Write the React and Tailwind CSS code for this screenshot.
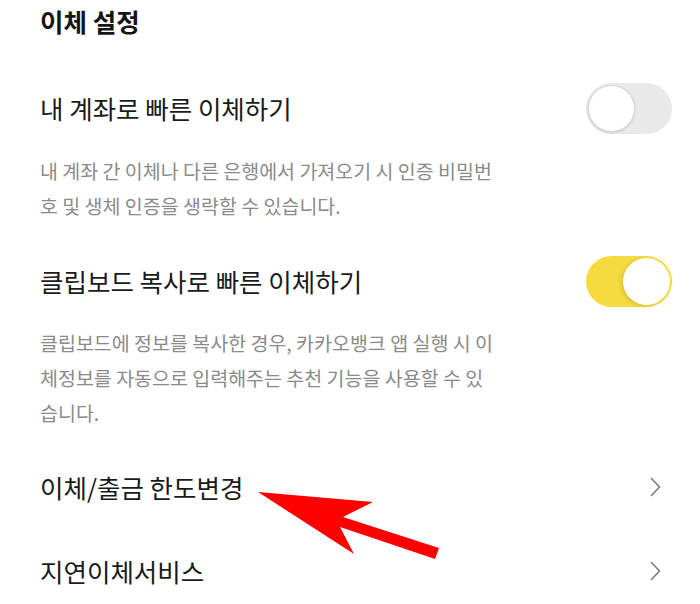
import React from "react";

const font = { fontFamily: '"Noto Sans CJK KR", "Noto Sans", sans-serif' };

const Toggle = ({ on }) => (
  <div
    className={`relative w-[86px] h-[51px] rounded-full flex items-center px-[2px] ${
      on ? "bg-[#f6db3f] justify-end" : "bg-[#e9e9ea] justify-start"
    }`}
  >
    <div
      className={`w-[47px] h-[47px] rounded-full bg-white ${
        on ? "shadow-[-2px_1px_4px_rgba(0,0,0,0.12)]" : "border border-[#d6d6d6] shadow-[0_1px_3px_rgba(0,0,0,0.12)]"
      }`}
    />
  </div>
);

const Chevron = () => (
  <svg width="11" height="20" viewBox="0 0 11 20" fill="none">
    <path d="M1.5 1.5 L9.5 10 L1.5 18.5" stroke="#7b7b7b" strokeWidth="1.6" strokeLinecap="round" strokeLinejoin="round" />
  </svg>
);

const Desc = ({ children, className = "" }) => (
  <p className={`w-[455px] text-[19.5px] leading-[35px] text-[#8a8a8a] ${className}`}>{children}</p>
);

export default function App() {
  return (
    <div className="relative w-[700px] h-[604px] bg-white overflow-hidden" style={font}>
      <div className="pl-10 pr-7">
        {/* 제목 */}
        <div className="h-[42px] flex items-center">
          <h1 className="text-[25.5px] font-bold text-[#151515]">이체 설정</h1>
        </div>

        {/* 내 계좌 */}
        <div className="mt-10 h-[52px] flex items-center justify-between">
          <span className="text-[25.5px] text-[#1a1a1a]">내 계좌로 빠른 이체하기</span>
          <Toggle on={false} />
        </div>
        <Desc className="mt-[19px]">
          내 계좌 간 이체나 다른 은행에서 가져오기 시 인증 비밀번호 및 생체 인증을 생략할 수 있습니다.
        </Desc>

        {/* 클립보드 */}
        <div className="mt-8 h-[52px] flex items-center justify-between">
          <span className="text-[25.5px] text-[#1a1a1a]">클립보드 복사로 빠른 이체하기</span>
          <Toggle on />
        </div>
        <Desc className="mt-[18px]">
          클립보드에 정보를 복사한 경우, 카카오뱅크 앱 실행 시 이체정보를 자동으로 입력해주는 추천 기능을 사용할 수 있습니다.
        </Desc>

        {/* 메뉴 */}
        <div className="mt-[31px] h-[52px] flex items-center justify-between pr-[11px]">
          <span className="text-[25.5px] text-[#1a1a1a]">이체/출금 한도변경</span>
          <Chevron />
        </div>
        <div className="mt-[32px] h-[52px] flex items-center justify-between pr-[11px]">
          <span className="text-[25.5px] text-[#1a1a1a]">지연이체서비스</span>
          <Chevron />
        </div>
      </div>

      {/* 빨간 화살표 */}
      <svg className="absolute left-0 top-0 pointer-events-none" width="700" height="604">
        <polygon
          points="258,492 373,502 343,517 439,548 435,559 340,527 354,554"
          fill="#ff0000"
        />
      </svg>
    </div>
  );
}
